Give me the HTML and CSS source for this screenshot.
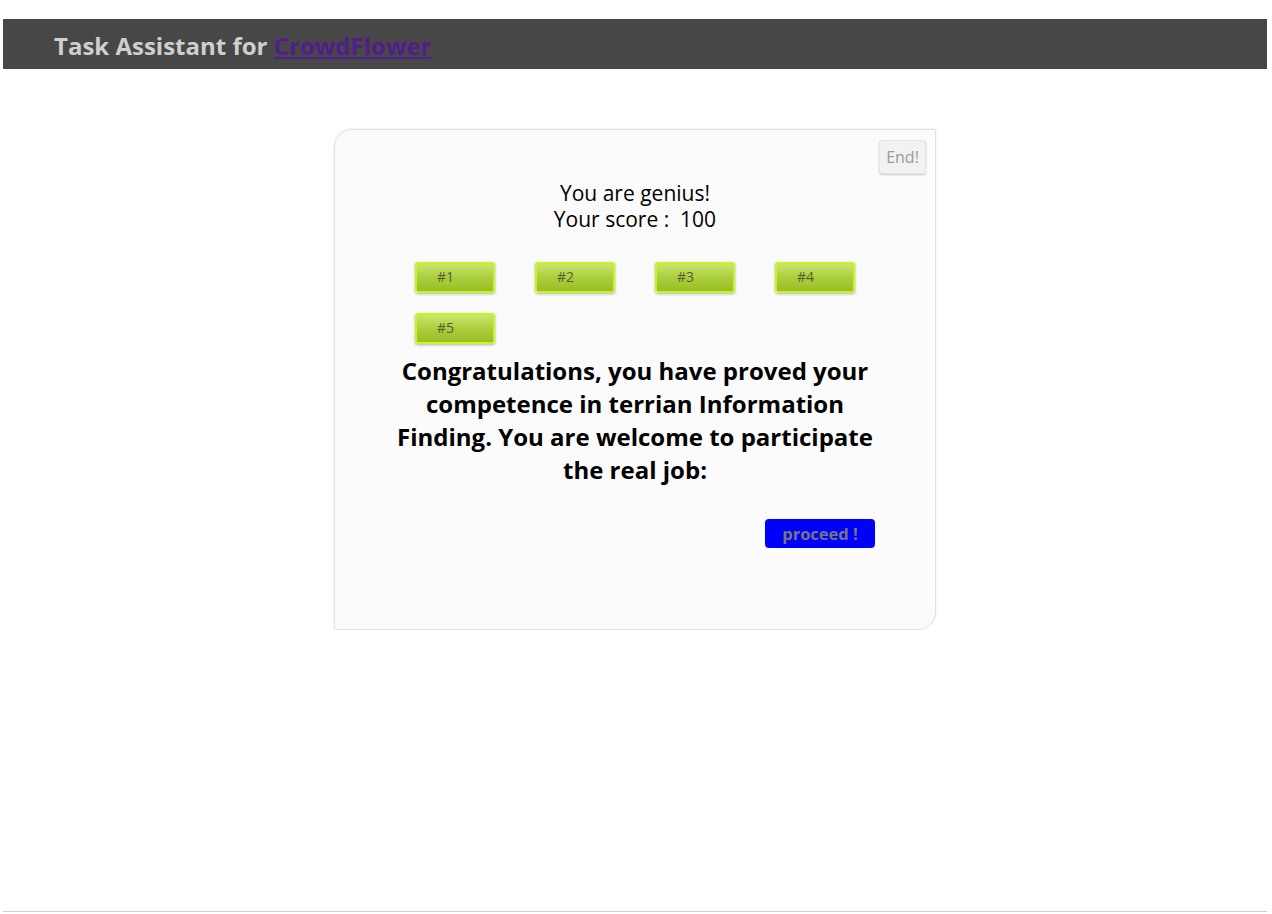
FILE: index.html
```html
<!DOCTYPE html>
<html>
<head>
<meta charset="utf-8">
<title>Task Assistant for CrowdFlower</title>
<link rel="stylesheet" href="styles.css">
</head>
<body>
<header class="topbar">
  <h1 class="title">Task Assistant for <a href="#" class="brand">CrowdFlower</a></h1>
</header>
<main class="stage">
  <section class="card">
    <button class="end-btn">End!</button>
    <div class="result">
      <p class="line">You are genius!</p>
      <p class="line">Your score :&nbsp; 100</p>
    </div>
    <div class="inner">
      <div class="tasks">
        <button class="task">#1</button>
        <button class="task">#2</button>
        <button class="task">#3</button>
        <button class="task">#4</button>
        <button class="task">#5</button>
      </div>
      <h2 class="congrats">Congratulations, you have proved your competence in terrian Information Finding. You are welcome to participate the real job:</h2>
      <div class="actions">
        <button class="proceed">proceed !</button>
      </div>
    </div>
  </section>
</main>
<div class="bottom-rule"></div>
</body>
</html>
```
FILE: styles.css
```css
html, body {
  margin: 0;
  padding: 0;
  background: #ffffff;
  font-family: "Open Sans", "Noto Sans", "Liberation Sans", sans-serif;
}
.topbar {
  margin: 19px 5px 0 3px;
  height: 50px;
  background: #474747;
  display: flex;
  align-items: center;
  padding-left: 51px;
}
.title {
  margin: 0;
  font-size: 24px;
  font-weight: 700;
  color: #cfcfcf;
  position: relative;
  top: 1px;
}
.brand {
  color: #4f1d8c;
  text-decoration: underline;
}
.stage {
  display: flex;
  justify-content: center;
  padding-top: 60px;
  padding-right: 2px;
}
.card {
  position: relative;
  width: 600px;
  height: 499px;
  background: #fbfbfb;
  border: 1px solid #e2e2e2;
  border-radius: 18px 0 18px 0;
  box-shadow: 0 0 3px rgba(0,0,0,0.08);
  box-sizing: content-box;
}
.end-btn {
  position: absolute;
  top: 10px;
  right: 9px;
  width: 47px;
  height: 34px;
  padding: 0;
  border: 1px solid #e4e4e4;
  border-radius: 3px;
  background: #f2f2f2;
  color: #9a9a9a;
  font-family: inherit;
  font-size: 16px;
  box-shadow: 0 1px 2px rgba(0,0,0,0.2);
}
.result {
  padding-top: 50px;
  text-align: center;
}
.line {
  margin: 0;
  font-size: 21px;
  line-height: 26px;
  color: #000;
}
.inner {
  width: 480px;
  margin: 0 auto;
}
.tasks {
  display: flex;
  flex-wrap: wrap;
  row-gap: 20px;
  margin-top: 30px;
}
.task {
  width: 80px;
  height: 31px;
  margin: 0 20px;
  padding: 0 0 2px 20px;
  text-align: left;
  border: 2px solid #c9f51c;
  border-radius: 3px;
  background: linear-gradient(#cbe46f, #a9cd39 55%, #98bf26);
  color: #555c3a;
  font-family: inherit;
  font-size: 14px;
  box-shadow: 0 1px 3px rgba(0,0,0,0.3);
}
.congrats {
  margin: 10px 0 0;
  text-align: center;
  font-size: 24px;
  line-height: 33px;
  font-weight: 700;
  color: #000;
}
.actions {
  display: flex;
  justify-content: flex-end;
  margin-top: 33px;
}
.proceed {
  width: 110px;
  height: 29px;
  padding: 0;
  border: none;
  border-radius: 4px;
  background: #0000ff;
  color: #777777;
  font-family: inherit;
  font-weight: 700;
  font-size: 16.5px;
}
.bottom-rule {
  position: absolute;
  top: 911px;
  left: 3px;
  width: 1264px;
  height: 1px;
  background: #cfcfcf;
}
```
